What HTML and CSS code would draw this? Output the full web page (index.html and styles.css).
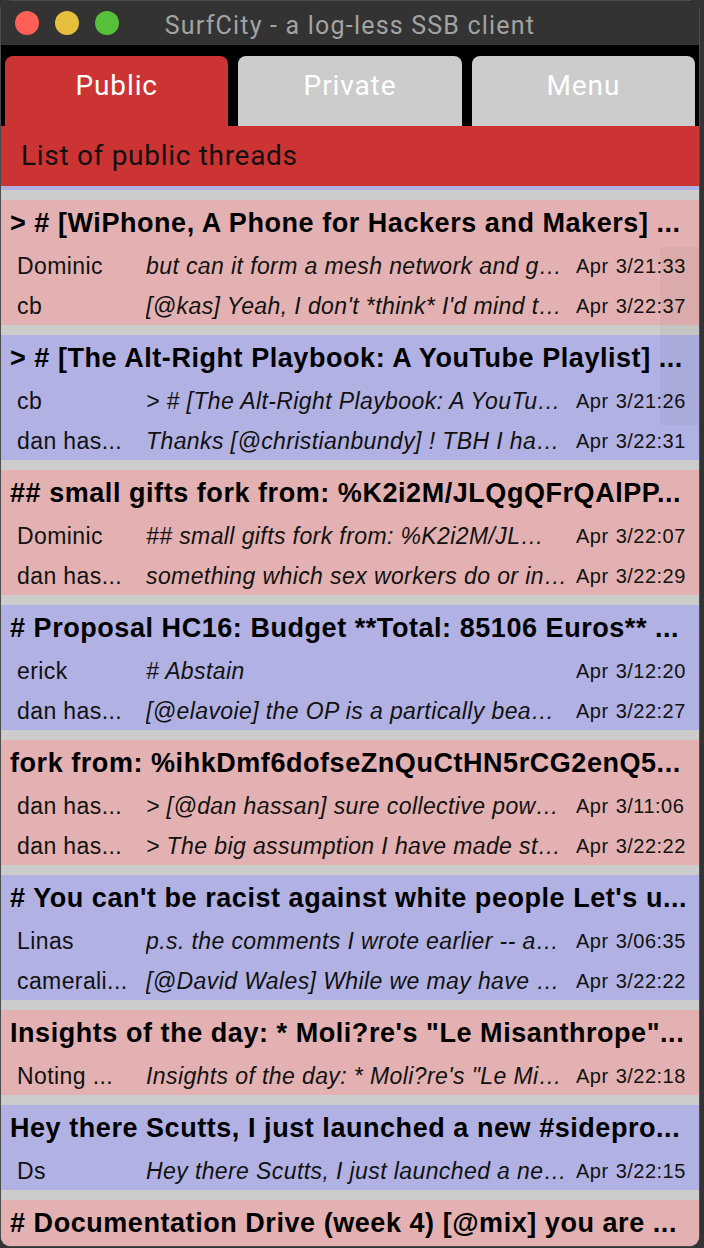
FILE: index.html
```html
<!DOCTYPE html>
<html>
<head>
<meta charset="utf-8">
<link rel="stylesheet" href="styles.css">
</head>
<body>
<div class="window">
  <div class="titlebar">
    <div class="lights">
      <span class="light red"></span>
      <span class="light yellow"></span>
      <span class="light green"></span>
    </div>
    <div class="wintitle">SurfCity - a log-less SSB client</div>
  </div>
  <div class="tabs">
    <div class="tab active">Public</div>
    <div class="tab">Private</div>
    <div class="tab">Menu</div>
  </div>
  <div class="header">List of public threads</div>
  <div class="list">
    <div class="scrollthumb"></div>

    <div class="thread pink">
      <div class="ttitle">&gt; # [WiPhone, A Phone for Hackers and Makers] ...</div>
      <div class="row"><span class="author">Dominic</span><span class="msg">but can it form a mesh network and g…</span><span class="date"><span>Apr</span><span>3/21:33</span></span></div>
      <div class="row"><span class="author">cb</span><span class="msg">[@kas] Yeah, I don't *think* I'd mind t…</span><span class="date"><span>Apr</span><span>3/22:37</span></span></div>
    </div>

    <div class="thread lav">
      <div class="ttitle">&gt; # [The Alt-Right Playbook: A YouTube Playlist] ...</div>
      <div class="row"><span class="author">cb</span><span class="msg">&gt; # [The Alt-Right Playbook: A YouTu…</span><span class="date"><span>Apr</span><span>3/21:26</span></span></div>
      <div class="row"><span class="author">dan has...</span><span class="msg">Thanks [@christianbundy] ! TBH I ha…</span><span class="date"><span>Apr</span><span>3/22:31</span></span></div>
    </div>

    <div class="thread pink">
      <div class="ttitle">## small gifts fork from: %K2i2M/JLQgQFrQAlPP...</div>
      <div class="row"><span class="author">Dominic</span><span class="msg">## small gifts fork from: %K2i2M/JL…</span><span class="date"><span>Apr</span><span>3/22:07</span></span></div>
      <div class="row"><span class="author">dan has...</span><span class="msg">something which sex workers do or in…</span><span class="date"><span>Apr</span><span>3/22:29</span></span></div>
    </div>

    <div class="thread lav">
      <div class="ttitle"># Proposal HC16: Budget **Total: 85106 Euros** ...</div>
      <div class="row"><span class="author">erick</span><span class="msg"># Abstain</span><span class="date"><span>Apr</span><span>3/12:20</span></span></div>
      <div class="row"><span class="author">dan has...</span><span class="msg">[@elavoie] the OP is a partically bea…</span><span class="date"><span>Apr</span><span>3/22:27</span></span></div>
    </div>

    <div class="thread pink">
      <div class="ttitle">fork from: %ihkDmf6dofseZnQuCtHN5rCG2enQ5...</div>
      <div class="row"><span class="author">dan has...</span><span class="msg">&gt; [@dan hassan] sure collective pow…</span><span class="date"><span>Apr</span><span>3/11:06</span></span></div>
      <div class="row"><span class="author">dan has...</span><span class="msg">&gt; The big assumption I have made st…</span><span class="date"><span>Apr</span><span>3/22:22</span></span></div>
    </div>

    <div class="thread lav">
      <div class="ttitle"># You can't be racist against white people Let's u...</div>
      <div class="row"><span class="author">Linas</span><span class="msg">p.s. the comments I wrote earlier -- a…</span><span class="date"><span>Apr</span><span>3/06:35</span></span></div>
      <div class="row"><span class="author">camerali...</span><span class="msg">[@David Wales] While we may have …</span><span class="date"><span>Apr</span><span>3/22:22</span></span></div>
    </div>

    <div class="thread pink">
      <div class="ttitle">Insights of the day: * Moli?re's "Le Misanthrope"...</div>
      <div class="row"><span class="author">Noting ...</span><span class="msg">Insights of the day: * Moli?re's "Le Mi…</span><span class="date"><span>Apr</span><span>3/22:18</span></span></div>
    </div>

    <div class="thread lav">
      <div class="ttitle">Hey there Scutts, I just launched a new #sidepro...</div>
      <div class="row"><span class="author">Ds</span><span class="msg">Hey there Scutts, I just launched a ne…</span><span class="date"><span>Apr</span><span>3/22:15</span></span></div>
    </div>

    <div class="thread pink">
      <div class="ttitle"># Documentation Drive (week 4) [@mix] you are ...</div>
      <div class="row"><span class="author">&nbsp;</span><span class="msg"></span><span class="date"></span></div>
    </div>
  </div>
</div>
</body>
</html>
```
FILE: styles.css
```css
html, body {
  margin: 0;
  padding: 0;
  background: #333333;
}
body {
  width: 704px;
  height: 1248px;
  overflow: hidden;
}
.window {
  box-sizing: border-box;
  width: 700px;
  height: 1247px;
  border: 1px solid #4c4c4c;
  border-radius: 10px;
  overflow: hidden;
  background: #000;
  display: flex;
  flex-direction: column;
}
.titlebar {
  height: 44px;
  background: #333333;
  display: flex;
  align-items: center;
  position: relative;
  flex: none;
}
.lights {
  display: flex;
  gap: 16px;
  padding-left: 14px;
}
.light {
  width: 24px;
  height: 24px;
  border-radius: 50%;
  display: block;
}
.light.red { background: #fe5f57; }
.light.yellow { background: #e6bf3c; }
.light.green { background: #57c03b; }
.wintitle {
  position: absolute;
  left: 0;
  right: 0;
  top: 0;
  height: 44px;
  line-height: 49px;
  text-align: center;
  font-family: Roboto, "Liberation Sans", sans-serif;
  font-size: 25px;
  letter-spacing: 1.2px;
  color: #a3a3a3;
  pointer-events: none;
}
.tabs {
  flex: none;
  display: flex;
  gap: 10px;
  padding: 11px 4px 0 4px;
  height: 70px;
}
.tab {
  flex: 1;
  background: #cccccc;
  border-radius: 8px 8px 0 0;
  color: #fff;
  font-family: Roboto, "Liberation Sans", sans-serif;
  font-size: 28px;
  letter-spacing: 0.9px;
  text-align: center;
  line-height: 60px;
}
.tab.active { background: #cc3333; }
.header {
  flex: none;
  height: 60px;
  background: #cc3333;
  font-family: Roboto, "Liberation Sans", sans-serif;
  font-size: 28px;
  letter-spacing: 0.7px;
  color: #111;
  line-height: 60px;
  padding-left: 20px;
}
.list {
  flex: 1;
  position: relative;
  background: #cccccc;
  border-top: 4px solid #b0b0e2;
  padding-top: 10px;
  display: flex;
  flex-direction: column;
  gap: 10px;
  overflow: hidden;
  font-family: "Liberation Sans", Arial, sans-serif;
  color: #111;
}
.scrollthumb {
  position: absolute;
  right: 0;
  top: 57px;
  width: 39px;
  height: 178px;
  background: rgba(0, 0, 0, 0.035);
  z-index: 2;
}
.thread {
  flex: none;
}
.pink { background: #e3b1b1; }
.lav { background: #b1b1e3; }
.ttitle {
  height: 45px;
  line-height: 47px;
  padding-left: 9px;
  font-weight: bold;
  font-size: 27px;
  letter-spacing: 0.55px;
  white-space: nowrap;
  overflow: hidden;
  color: #000;
}
.row {
  height: 40px;
  display: flex;
  align-items: center;
  white-space: nowrap;
  font-size: 23px;
  letter-spacing: 0.4px;
  padding-top: 2px;
  box-sizing: border-box;
}
.author {
  width: 129px;
  padding-left: 16px;
  flex: none;
  overflow: hidden;
}
.msg {
  width: 430px;
  flex: none;
  font-style: italic;
  overflow: hidden;
}
.date {
  display: flex;
  gap: 7px;
  font-size: 20px;
  letter-spacing: 0.5px;
}
```
